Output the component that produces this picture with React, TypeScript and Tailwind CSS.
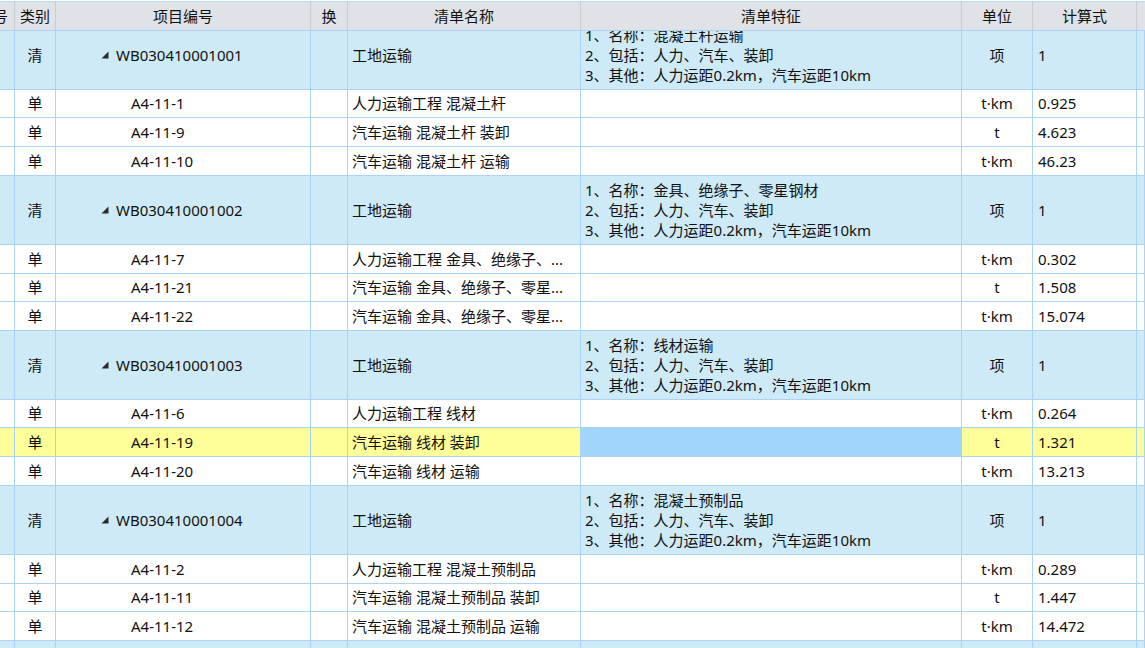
import React from "react";

type Item = { code: string; name: string; unit: string; calc: string; h: number; sel?: boolean };
type Group = { code: string; feat: string[]; items: Item[] };

const groups: Group[] = [
  {
    code: "WB030410001001",
    feat: ["1、名称：混凝土杆运输", "2、包括：人力、汽车、装卸", "3、其他：人力运距0.2km，汽车运距10km"],
    items: [
      { code: "A4-11-1", name: "人力运输工程 混凝土杆", unit: "t·km", calc: "0.925", h: 28 },
      { code: "A4-11-9", name: "汽车运输 混凝土杆 装卸", unit: "t", calc: "4.623", h: 29 },
      { code: "A4-11-10", name: "汽车运输 混凝土杆 运输", unit: "t·km", calc: "46.23", h: 29 },
    ],
  },
  {
    code: "WB030410001002",
    feat: ["1、名称：金具、绝缘子、零星钢材", "2、包括：人力、汽车、装卸", "3、其他：人力运距0.2km，汽车运距10km"],
    items: [
      { code: "A4-11-7", name: "人力运输工程 金具、绝缘子、...", unit: "t·km", calc: "0.302", h: 29 },
      { code: "A4-11-21", name: "汽车运输 金具、绝缘子、零星...", unit: "t", calc: "1.508", h: 28 },
      { code: "A4-11-22", name: "汽车运输 金具、绝缘子、零星...", unit: "t·km", calc: "15.074", h: 29 },
    ],
  },
  {
    code: "WB030410001003",
    feat: ["1、名称：线材运输", "2、包括：人力、汽车、装卸", "3、其他：人力运距0.2km，汽车运距10km"],
    items: [
      { code: "A4-11-6", name: "人力运输工程 线材", unit: "t·km", calc: "0.264", h: 28 },
      { code: "A4-11-19", name: "汽车运输 线材 装卸", unit: "t", calc: "1.321", h: 29, sel: true },
      { code: "A4-11-20", name: "汽车运输 线材 运输", unit: "t·km", calc: "13.213", h: 29 },
    ],
  },
  {
    code: "WB030410001004",
    feat: ["1、名称：混凝土预制品", "2、包括：人力、汽车、装卸", "3、其他：人力运距0.2km，汽车运距10km"],
    items: [
      { code: "A4-11-2", name: "人力运输工程 混凝土预制品", unit: "t·km", calc: "0.289", h: 29 },
      { code: "A4-11-11", name: "汽车运输 混凝土预制品 装卸", unit: "t", calc: "1.447", h: 28 },
      { code: "A4-11-12", name: "汽车运输 混凝土预制品 运输", unit: "t·km", calc: "14.472", h: 29 },
    ],
  },
];

const cols = "grid grid-cols-[15px_41px_255px_37px_233px_381px_71px_104px_1fr] shrink-0";
const cell = "border-r border-b border-[#a9d4f7] flex items-center overflow-hidden whitespace-nowrap";

function Tri() {
  return (
    <svg width="8" height="8" viewBox="0 0 8 8" className="shrink-0">
      <polygon points="7.5,0.5 7.5,7.5 0.5,7.5" fill="#2b2b2b" />
    </svg>
  );
}

function GroupRow({ g, first }: { g: Group; first?: boolean }) {
  const bg = "bg-[#cfeaf7]";
  return (
    <div className={`${cols} h-[69px] ${first ? "-mt-[10px]" : ""}`}>
      <div className={`${cell} ${bg}`} />
      <div className={`${cell} ${bg} justify-center`}>清</div>
      <div className={`${cell} ${bg} pl-[45px] gap-[7px]`}>
        <Tri />
        <span>{g.code}</span>
      </div>
      <div className={`${cell} ${bg}`} />
      <div className={`${cell} ${bg} pl-[4px]`}>工地运输</div>
      <div className={`${cell} ${bg} pl-[4px] flex-col items-start justify-center leading-[20px]`}>
        {g.feat.map((f) => (
          <div key={f}>{f}</div>
        ))}
      </div>
      <div className={`${cell} ${bg} justify-center`}>项</div>
      <div className={`${cell} ${bg} pl-[5px]`}>1</div>
      <div className={`${cell} ${bg}`} />
    </div>
  );
}

function ItemRow({ it }: { it: Item }) {
  const bg = it.sel ? "bg-[#ffff99]" : "bg-white";
  return (
    <div className={cols} style={{ height: it.h }}>
      <div className={`${cell} ${bg}`} />
      <div className={`${cell} ${bg} justify-center`}>单</div>
      <div className={`${cell} ${bg} pl-[75px]`}>{it.code}</div>
      <div className={`${cell} ${bg}`} />
      <div className={`${cell} ${bg} pl-[4px]`}>{it.name}</div>
      <div className={`${cell} ${it.sel ? "bg-[#a1d5fa]" : "bg-white"}`} />
      <div className={`${cell} ${bg} justify-center`}>{it.unit}</div>
      <div className={`${cell} ${bg} pl-[5px]`}>{it.calc}</div>
      <div className={`${cell} ${bg}`} />
    </div>
  );
}

const hcell = "border-r border-[#c9cdd3] flex items-center justify-center overflow-hidden whitespace-nowrap";

export default function App() {
  return (
    <div className="w-[1145px] h-[648px] overflow-hidden bg-white flex flex-col text-[15px] text-[#111] font-['Noto_Sans','Noto_Sans_CJK_SC',sans-serif]">
      <div className="h-[1px] bg-white shrink-0" />
      <div className={`${cols} h-[30px] bg-[#dfe3e8] border-t border-[#b5d8f5] border-b border-b-[#a9d4f7]`}>
        <div className={`${hcell} !justify-end pr-[6px]`}>序号</div>
        <div className={hcell}>类别</div>
        <div className={hcell}>项目编号</div>
        <div className={hcell}>换</div>
        <div className={hcell}>清单名称</div>
        <div className={hcell}>清单特征</div>
        <div className={hcell}>单位</div>
        <div className={hcell}>计算式</div>
        <div className="" />
      </div>
      <div className="flex-1 min-h-0 overflow-hidden flex flex-col">
        {groups.map((g, i) => (
          <React.Fragment key={g.code}>
            <GroupRow g={g} first={i === 0} />
            {g.items.map((it) => (
              <ItemRow key={it.code} it={it} />
            ))}
          </React.Fragment>
        ))}
        <div className={`${cols} h-[69px]`}>
          {Array.from({ length: 9 }).map((_, k) => (
            <div key={k} className={`${cell} bg-[#cfeaf7]`} />
          ))}
        </div>
      </div>
    </div>
  );
}
